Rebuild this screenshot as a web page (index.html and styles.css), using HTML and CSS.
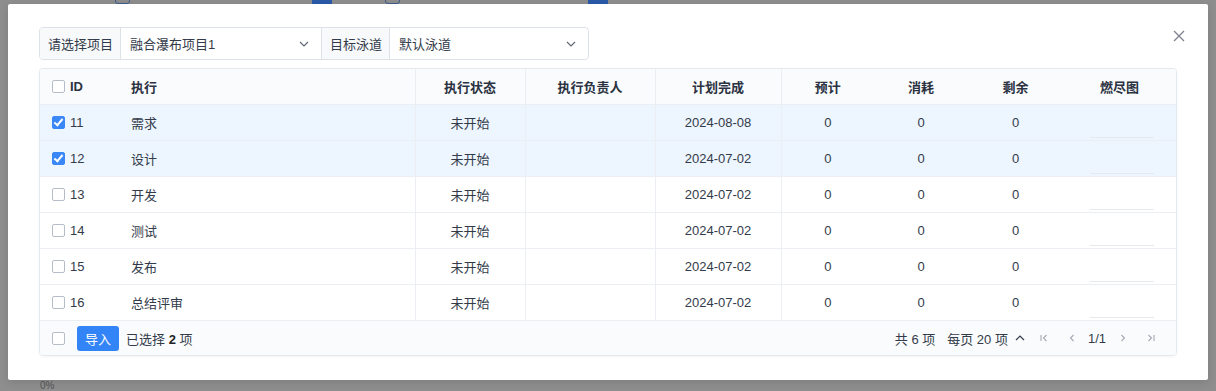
FILE: index.html
```html
<!DOCTYPE html>
<html lang="zh-CN">
<head>
  <meta charset="utf-8"/>
  <meta content="width=device-width, initial-scale=1.0" name="viewport"/>
  <title>导入执行</title>
  <link rel="stylesheet" href="styles.css">
</head>
<body>

<div class="page-behind">
  <span class="peek tag" style="left:115px"></span>
  <span class="peek badge" style="left:312px"></span>
  <span class="peek tag" style="left:385px"></span>
  <span class="peek badge" style="left:588px"></span>
</div>

<div class="overlay">
  <div class="modal">
    <button class="close-btn" aria-label="关闭">
      <svg width="12" height="12" viewBox="0 0 12 12"><path d="M1 1L11 11M11 1L1 11" stroke="#7d838e" stroke-width="1.3" fill="none"/></svg>
    </button>

    <div class="picker">
      <div class="picker-label">请选择项目</div>
      <div class="picker-select picker-wide">
        <span>融合瀑布项目1</span>
        <svg class="chev" width="10" height="6" viewBox="0 0 10 6"><path d="M1 1L5 5L9 1" stroke="#5d6470" stroke-width="1.1" fill="none"/></svg>
      </div>
      <div class="picker-label">目标泳道</div>
      <div class="picker-select picker-rest">
        <span>默认泳道</span>
        <svg class="chev" width="10" height="6" viewBox="0 0 10 6"><path d="M1 1L5 5L9 1" stroke="#5d6470" stroke-width="1.1" fill="none"/></svg>
      </div>
    </div>

    <div class="grid-box">
      <table class="grid">
        <colgroup>
          <col style="width:91px"><col style="width:284px"><col style="width:110px">
          <col style="width:130px"><col style="width:126px"><col style="width:93px">
          <col style="width:94px"><col style="width:95px"><col style="width:113px">
        </colgroup>
        <thead>
          <tr>
            <th class="left"><span class="cb"></span>ID</th>
            <th class="left">执行</th>
            <th class="sep">执行状态</th>
            <th class="sep">执行负责人</th>
            <th class="sep">计划完成</th>
            <th class="sep">预计</th>
            <th>消耗</th>
            <th>剩余</th>
            <th>燃尽图</th>
          </tr>
        </thead>
        <tbody id="rows"></tbody>
      </table>

      <div class="grid-foot">
        <div class="foot-left">
          <span class="cb"></span>
          <button class="btn-primary">导入</button>
          <span>已选择 <b>2</b> 项</span>
        </div>
        <div class="foot-right">
          <span>共 6 项</span>
          <span class="per-page">每页 20 项
            <svg width="10" height="6" viewBox="0 0 10 6"><path d="M1 5L5 1L9 5" stroke="#333b4a" stroke-width="1.2" fill="none"/></svg>
          </span>
          <span class="pager">
            <svg class="pg-first" width="10" height="10" viewBox="0 0 10 10"><path d="M2 2V8M7.5 2L4.5 5L7.5 8" stroke="#a3a9b3" stroke-width="1.1" fill="none"/></svg>
            <svg class="pg-prev" width="10" height="10" viewBox="0 0 10 10"><path d="M6.5 2L3.5 5L6.5 8" stroke="#a3a9b3" stroke-width="1.1" fill="none"/></svg>
            <span class="pager-num">1/1</span>
            <svg class="pg-next" width="10" height="10" viewBox="0 0 10 10"><path d="M3.5 2L6.5 5L3.5 8" stroke="#a3a9b3" stroke-width="1.1" fill="none"/></svg>
            <svg class="pg-last" width="10" height="10" viewBox="0 0 10 10"><path d="M8 2V8M2.5 2L5.5 5L2.5 8" stroke="#a3a9b3" stroke-width="1.1" fill="none"/></svg>
          </span>
        </div>
      </div>
    </div>
  </div>
  <div class="behind-text">0%</div>
</div>

<script>
  const rows = [
    { id: 11, name: "需求", date: "2024-08-08", checked: true },
    { id: 12, name: "设计", date: "2024-07-02", checked: true },
    { id: 13, name: "开发", date: "2024-07-02" },
    { id: 14, name: "测试", date: "2024-07-02" },
    { id: 15, name: "发布", date: "2024-07-02" },
    { id: 16, name: "总结评审", date: "2024-07-02" }
  ];

  const body = document.getElementById('rows');
  rows.forEach(r => {
    const tr = document.createElement('tr');
    if (r.checked) tr.className = 'selected';
    tr.innerHTML = `
      <td class="left"><span class="cb${r.checked ? ' on' : ''}"></span>${r.id}</td>
      <td class="left">${r.name}</td>
      <td class="sep">未开始</td>
      <td class="sep"></td>
      <td class="sep">${r.date}</td>
      <td class="sep">0</td>
      <td>0</td>
      <td>0</td>
      <td><div class="burn"></div></td>`;
    body.appendChild(tr);
  });
</script>

</body>
</html>
```

FILE: styles.css
```css
html, body {
  margin: 0;
  height: 391px;
  overflow: hidden;
}

body {
  background-color: #8e8e8e;
  font-family: 'Liberation Sans', 'Noto Sans CJK SC', sans-serif;
  font-size: 13px;
  color: #333b4a;
  position: relative;
}

/* page content that peeks out behind the mask */
.page-behind .peek {
  position: absolute;
  top: -9px;
  height: 13px;
}

.page-behind .badge {
  width: 20px;
  background: #2a5aa8;
}

.page-behind .tag {
  width: 15px;
  box-sizing: border-box;
  border: 1px solid #3e5c8c;
  border-radius: 3px;
}

.overlay {
  position: relative;
  padding: 4px 8px 0;
}

.modal {
  position: relative;
  width: 1200px;
  height: 376px;
  box-sizing: border-box;
  background: #fff;
  border-radius: 2px;
  padding: 23px 31px 0;
  box-shadow: 0 2px 10px rgba(0, 0, 0, 0.12);
}

.close-btn {
  position: absolute;
  top: 22px;
  right: 19px;
  width: 20px;
  height: 20px;
  padding: 0;
  border: none;
  background: none;
  display: flex;
  align-items: center;
  justify-content: center;
  cursor: pointer;
}

.behind-text {
  padding: 1px 0 0 32px;
  font-size: 10px;
  line-height: 10px;
  color: #555;
}

/* project / lane picker */
.picker {
  display: flex;
  width: 550px;
  height: 33px;
  box-sizing: border-box;
  border: 1px solid #dde1e8;
  border-radius: 4px;
  overflow: hidden;
}

.picker-label {
  display: flex;
  align-items: center;
  padding: 0 7px 0 8px;
  background: #f8f9fb;
  border-right: 1px solid #dde1e8;
  white-space: nowrap;
}

.picker-select {
  display: flex;
  align-items: center;
  justify-content: space-between;
  padding: 0 12px 0 9px;
  box-sizing: border-box;
  border-right: 1px solid #dde1e8;
}

.picker-wide {
  width: 201px;
}

.picker-rest {
  flex: 1;
  border-right: none;
}

/* table */
.grid-box {
  margin-top: 8px;
  width: 1138px;
  border: 1px solid #e4e8ef;
  border-radius: 4px;
  box-sizing: border-box;
  overflow: hidden;
  box-shadow: 0 1px 3px rgba(0, 0, 0, 0.04);
}

.grid {
  width: 1136px;
  table-layout: fixed;
  border-collapse: collapse;
}

.grid th,
.grid td {
  padding: 0;
  text-align: center;
  border-bottom: 1px solid #ebeef3;
  white-space: nowrap;
}

.grid th {
  height: 35px;
  background: #fafbfd;
  font-weight: bold;
  color: #2b3241;
}

.grid td {
  height: 35px;
}

.grid .left {
  text-align: left;
}

.grid th.left:first-child,
.grid td.left:first-child {
  padding-left: 12px;
}

.grid .sep {
  border-left: 1px solid #ebeef3;
}

.grid tr.selected td {
  background: #edf5ff;
}

.cb {
  display: inline-block;
  width: 13px;
  height: 13px;
  box-sizing: border-box;
  border: 1px solid #b7bdc8;
  border-radius: 2px;
  background: #fff;
  vertical-align: -2px;
  margin-right: 5px;
  position: relative;
}

.cb.on {
  background: #3a87f8;
  border-color: #3a87f8;
}

.cb.on::after {
  content: "";
  position: absolute;
  left: 3px;
  top: 0px;
  width: 3px;
  height: 7px;
  border: solid #fff;
  border-width: 0 2px 2px 0;
  transform: rotate(40deg);
}

.burn {
  width: 64px;
  height: 24px;
  margin: 6px auto 0 27px;
  border-bottom: 1px solid #e6e9ee;
}

/* footer */
.grid-foot {
  display: flex;
  justify-content: space-between;
  align-items: center;
  height: 34px;
  background: #fafbfd;
  padding: 0 20px 0 12px;
}

.foot-left {
  display: flex;
  align-items: center;
}

.foot-left .cb {
  margin-right: 12px;
}

.foot-left b {
  color: #222;
}

.btn-primary {
  height: 25px;
  width: 42px;
  margin-right: 7px;
  padding: 0;
  border: none;
  border-radius: 3px;
  background: #3384f6;
  color: #fff;
  font: inherit;
  cursor: pointer;
}

.foot-right {
  display: flex;
  align-items: center;
  gap: 12px;
}

.per-page {
  display: flex;
  align-items: center;
  gap: 7px;
}

.pager {
  display: flex;
  align-items: center;
  margin-left: 2px;
}

.pg-prev {
  margin-left: 18px;
}

.pager-num {
  margin: 0 12px 0 11px;
}

.pg-last {
  margin-left: 18px;
}
```
